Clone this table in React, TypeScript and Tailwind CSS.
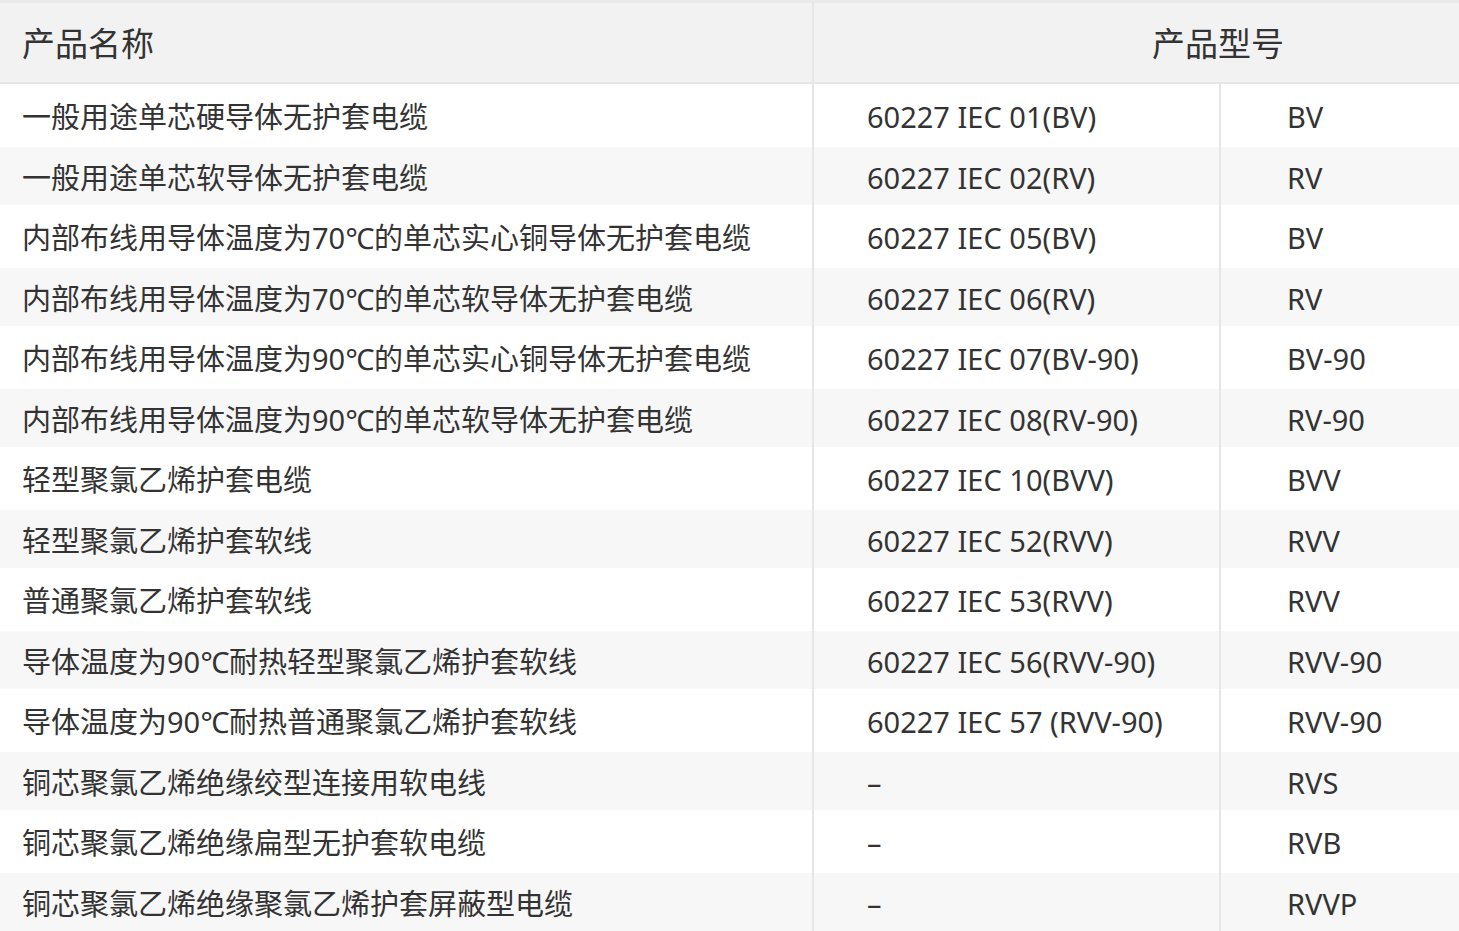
import React from "react";

const rows: [string, string, string][] = [
  ["一般用途单芯硬导体无护套电缆", "60227 IEC 01(BV)", "BV"],
  ["一般用途单芯软导体无护套电缆", "60227 IEC 02(RV)", "RV"],
  ["内部布线用导体温度为70℃的单芯实心铜导体无护套电缆", "60227 IEC 05(BV)", "BV"],
  ["内部布线用导体温度为70℃的单芯软导体无护套电缆", "60227 IEC 06(RV)", "RV"],
  ["内部布线用导体温度为90℃的单芯实心铜导体无护套电缆", "60227 IEC 07(BV-90)", "BV-90"],
  ["内部布线用导体温度为90℃的单芯软导体无护套电缆", "60227 IEC 08(RV-90)", "RV-90"],
  ["轻型聚氯乙烯护套电缆", "60227 IEC 10(BVV)", "BVV"],
  ["轻型聚氯乙烯护套软线", "60227 IEC 52(RVV)", "RVV"],
  ["普通聚氯乙烯护套软线", "60227 IEC 53(RVV)", "RVV"],
  ["导体温度为90℃耐热轻型聚氯乙烯护套软线", "60227 IEC 56(RVV-90)", "RVV-90"],
  ["导体温度为90℃耐热普通聚氯乙烯护套软线", "60227 IEC 57 (RVV-90)", "RVV-90"],
  ["铜芯聚氯乙烯绝缘绞型连接用软电线", "–", "RVS"],
  ["铜芯聚氯乙烯绝缘扁型无护套软电缆", "–", "RVB"],
  ["铜芯聚氯乙烯绝缘聚氯乙烯护套屏蔽型电缆", "–", "RVVP"],
];

export default function App() {
  return (
    <div
      className="w-[1459px] h-[931px] overflow-hidden bg-white text-[#333333]"
      style={{ fontFamily: '"Noto Sans", "Noto Sans CJK SC", sans-serif' }}
    >
      <div className="border-t-[3px] border-[#e9e9e9]">
        <div className="grid grid-cols-[812px_1fr] h-[81px] bg-[#f2f2f2] border-b-2 border-[#e6e6e6]">
          <div className="flex items-center pt-[3px] pl-[22px] text-[33px]">产品名称</div>
          <div className="flex items-center pt-[3px] pl-[338px] text-[33px] border-l-2 border-[#e6e6e6]">产品型号</div>
        </div>
        {rows.map((r, i) => (
          <div
            key={i}
            className={`grid grid-cols-[812px_407px_1fr] text-[29px] ${i % 2 === 1 ? "bg-[#f7f7f7] h-[58px]" : "bg-white h-[63px]"}`}
          >
            <div className="flex items-center pt-[3px] pl-[22px] whitespace-nowrap">{r[0]}</div>
            <div className="flex items-center pt-[3px] pl-[53px] border-l-2 border-[#e6e6e6] whitespace-nowrap">{r[1]}</div>
            <div className="flex items-center pt-[3px] pl-[66px] border-l-2 border-[#e6e6e6] whitespace-nowrap">{r[2]}</div>
          </div>
        ))}
      </div>
    </div>
  );
}
